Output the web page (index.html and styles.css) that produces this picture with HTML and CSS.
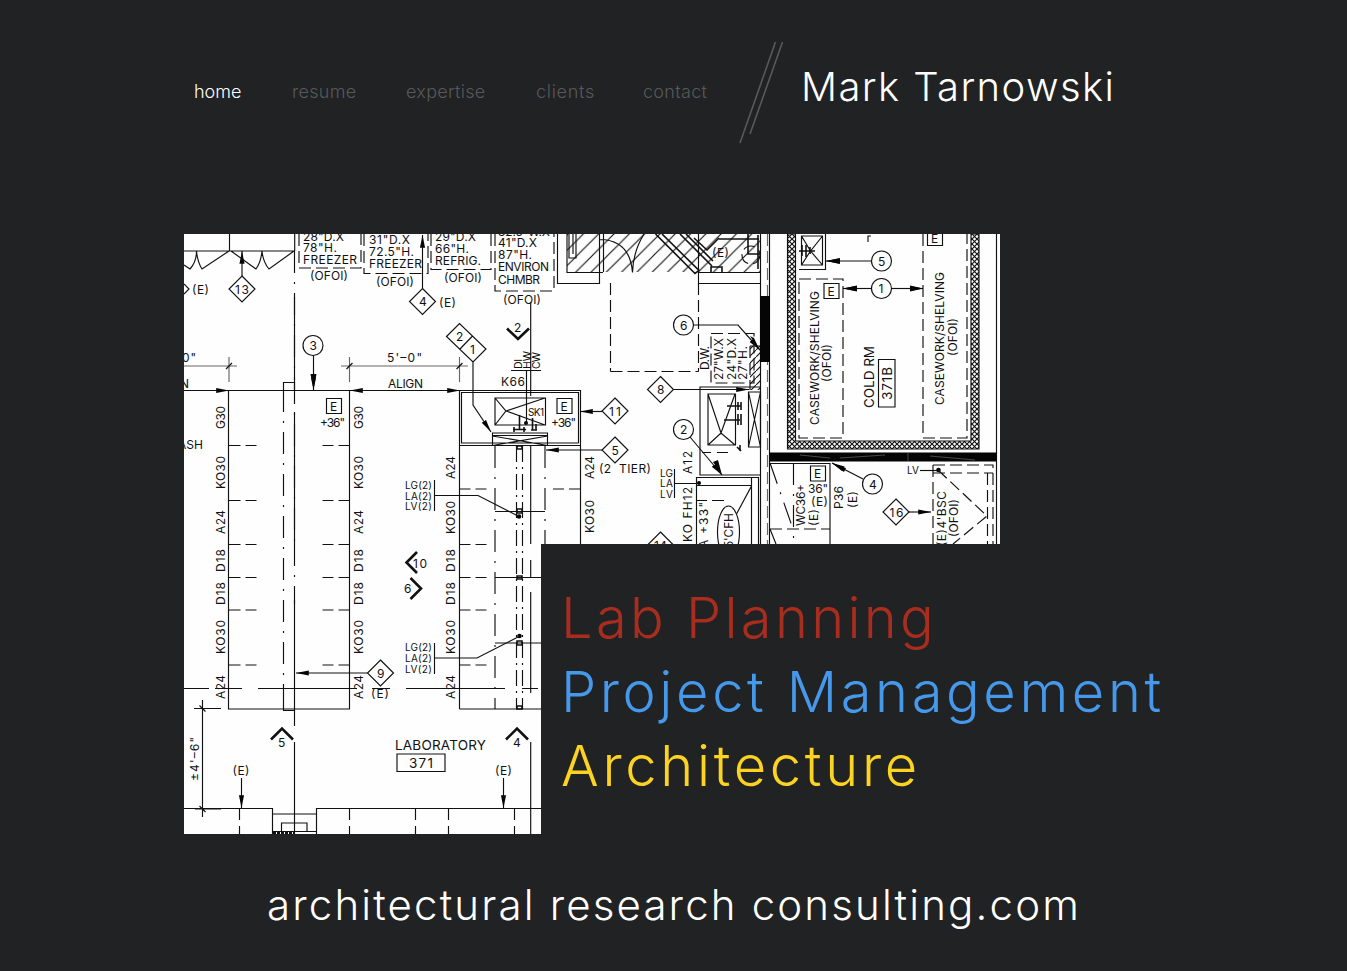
FILE: index.html
```html
<!DOCTYPE html>
<html lang="en">
<head>
<meta charset="utf-8">
<title>Mark Tarnowski</title>
<link rel="stylesheet" href="styles.css">
</head>
<body>
<div class="page">
<header class="header">
<nav class="nav">
<a class="nav-link home active">home</a><a class="nav-link resume">resume</a><a class="nav-link expertise">expertise</a><a class="nav-link clients">clients</a><a class="nav-link contact">contact</a>
</nav>
<svg class="slashes" width="46" height="104" viewBox="739 41 46 104"><path d="M775.5 42 740 143M782.500 42 750 134"/></svg>
<h1 class="name">Mark Tarnowski</h1>
</header>
<main class="hero">
<svg class="plan" width="816" height="600" viewBox="184 234 816 600">
<defs>
<g id="dia"><path d="M0-13 13 0 0 13-13 0Z"/></g>
<g id="cir"><circle r="10"/></g>
<g id="ebox"><path d="M-7.500-7.500h15v15h-15z"/></g>
<marker id="arr" orient="auto-start-reverse" markerUnits="userSpaceOnUse" markerWidth="14" markerHeight="8" refX="11" refY="3" viewBox="0 0 12 6"><path d="M0 .8 11 3 0 5.200Z" class="solid"/></marker>
<pattern id="hatch" width="15.300" height="15.300" patternUnits="userSpaceOnUse" x="568" y="234"><path d="M-1 16.300 16.300-1M-1 1 1-1M14.300 16.300l2-2"/></pattern>
<pattern id="mesh" width="5" height="5" patternUnits="userSpaceOnUse" x="787" y="234"><path d="M0 0 5 5M5 0 0 5"/></pattern>
<pattern id="fine" width="7" height="7" patternUnits="userSpaceOnUse"><path d="M-1 8 8-1"/></pattern>
</defs>
<rect class="paper" x="184" y="234" width="816" height="600"/>

<!-- shafts, doors and corridor wall -->
<path class="hatched" d="M567 234H760V272H567Z"/>
<path d="M567 234v38.500h36M698 272.500h62.500M557.500 234v49.500h42V234M603.500 234v38M600 239.500Q630 240 632.500 272.500Q633 252 644 234M569 234v24h7v-24M573 234v20M698.500 234v49.500h62V544M760.500 234v50M769.500 234V544"/>
<path class="mid" d="M655.500 234 695 273.500 699 270.500 662 234M680 234l32 32M686 234l27 27M694 238l13 12 12-12M748 234v20h12M711 272v-5h11v5M758 235v34M719 239h40"/>
<circle cx="751" cy="255" r="9" class="dash"/><text x="712" y="257" textLength="17">(E)</text>
<path class="dash" d="M610.500 283v88.500M610.500 371.500h88M698.500 283v88.500"/>
<path class="grey dash" d="M767.500 234V544"/>
<rect class="solid" x="760" y="296" width="10" height="66"/>

<!-- cabinets along the top edge -->
<path d="M184 251h111M229.500 234v17M294.700 234v17M196.500 251q0 11-6.500 18l-6-4M196.500 251q1 11 5.500 18l27-18M262 251q-1 11-6 18l-25-18M262 251q1 11 7 18l25-18"/>
<path class="dash" d="M299 234v34h62v-34M364 234v39.500h64V234M431 234v35.500h60V234M495 234v57h59v-57"/>
<text x="303" y="241" textLength="41">28"D.X</text><text x="303" y="252" textLength="34">78"H.</text><text x="303" y="264" textLength="54">FREEZER</text><text x="310" y="280" textLength="38">(OFOI)</text>
<text x="369" y="244" textLength="41">31"D.X</text><text x="369" y="255.500" textLength="45">72.5"H.</text><text x="369" y="267.500" textLength="53">FREEZER</text><text x="376" y="286" textLength="38">(OFOI)</text>
<text x="435" y="241" textLength="41">29"D.X</text><text x="435" y="252.500" textLength="34">66"H.</text><text x="435" y="264.500" textLength="46">REFRIG.</text><text x="444" y="282" textLength="38">(OFOI)</text>
<text x="498" y="236" textLength="52">32.5"W.X</text><text x="498" y="247" textLength="39">41"D.X</text><text x="498" y="258.500" textLength="34">87"H.</text><text x="498" y="271" textLength="51">ENVIRON</text><text x="498" y="284" textLength="42">CHMBR</text><text x="503" y="304" textLength="38">(OFOI)</text>
<use href="#dia" x="242" y="289"/><text x="235" y="293.500" textLength="14">13</text><path d="M242 276v-25" marker-end="url(#arr)"/><path d="M184 284l5 5-5 5"/><text x="192" y="294" textLength="17">(E)</text>
<use href="#dia" x="422.500" y="301.500"/><text x="419" y="306">4</text><path d="M422.500 288v-53" marker-end="url(#arr)"/><text x="439" y="306.500" textLength="17">(E)</text>

<!-- dimensions -->
<path class="grey" d="M184 366h53M341 366h127M229 357v25M349.500 357v25M459.500 357v25"/>
<path d="M226 369l6-6M346.500 369l6-6M456.500 369l6-6"/>
<path d="M184 390.500h45" marker-end="url(#arr)"/><path d="M350 390.500h110" marker-start="url(#arr)" marker-end="url(#arr)"/>
<text x="182" y="362" textLength="14">0"</text><text x="387" y="362" textLength="35">5'–0"</text><text x="388" y="388" textLength="35">ALIGN</text><text x="180" y="388">N</text><text x="178" y="449" textLength="25">ASH</text>

<!-- bench on the left -->
<path d="M228.500 390.500h121V709h-121zM283.500 390v-7.500h11M283.500 689v21.500h11"/>
<path class="axis" d="M294.500 251V380M294.500 382V544"/><path class="axis" d="M283.500 390V689"/><path d="M294.500 297v94M294.500 412v132M294.500 600v126M294.500 742v92"/><path class="axis" d="M294.500 544v60"/>
<path d="M228.500 445.500h12m5 0h11m66 0h11m5 0h11M228.500 500.500h12m5 0h11m66 0h11m5 0h11M228.500 544.500h12m5 0h11m66 0h11m5 0h11M228.500 577.500h12m5 0h11m66 0h11m5 0h11M228.500 610h12m5 0h11m66 0h11m5 0h11M228.500 665h12m5 0h11m66 0h11m5 0h11"/>
<use href="#cir" x="313" y="345.500"/><text x="309.500" y="350">3</text><path d="M313.500 355.500V390" marker-end="url(#arr)"/><path class="solid" d="M310.500 374h6l-3 15z"/>
<use href="#ebox" x="334" y="406"/><text x="330" y="410.500">E</text><text x="320" y="427" textLength="25">+36"</text>
<g>
<text transform="translate(225 429)rotate(-90)" textLength="23">G30</text><text transform="translate(225 489)rotate(-90)" textLength="33">KO30</text><text transform="translate(225 534)rotate(-90)" textLength="24">A24</text><text transform="translate(225 572)rotate(-90)" textLength="23">D18</text><text transform="translate(225 605)rotate(-90)" textLength="23">D18</text><text transform="translate(225 654)rotate(-90)" textLength="34">KO30</text><text transform="translate(225 699)rotate(-90)" textLength="24">A24</text>
<text transform="translate(363 429)rotate(-90)" textLength="23">G30</text><text transform="translate(363 489)rotate(-90)" textLength="33">KO30</text><text transform="translate(363 534)rotate(-90)" textLength="24">A24</text><text transform="translate(363 572)rotate(-90)" textLength="23">D18</text><text transform="translate(363 605)rotate(-90)" textLength="23">D18</text><text transform="translate(363 654)rotate(-90)" textLength="34">KO30</text><text transform="translate(363 699)rotate(-90)" textLength="24">A24</text>
</g>
<path d="M184 688.500h25m6 0h27m16 0h99m15 0h18m16 0h99m17 0h16"/>
<use href="#dia" x="380.500" y="673"/><text x="377" y="677.500">9</text><path d="M367.500 673H296" marker-end="url(#arr)"/><text x="371" y="698" textLength="18">(E)</text>

<!-- lower wall -->
<path d="M202.500 700v117M194 708.500h27M195 809h26M199.500 705.500l6 6M199.500 806l6 6"/>
<text transform="translate(199 781)rotate(-90)" textLength="44">±4'–6"</text>
<path d="M184 808.500h88.500V834M272.500 814h44M316.500 834v-25.500H541M281.500 831v-8h25.500v8M272.500 831.500h44"/>
<path class="thick hatchline" d="M273 833h22"/>
<path d="M239.500 809v11m0 6v8M349.500 809v11m0 6v8M415.500 809v11m0 6v8M448.500 809v11m0 6v8M514.500 809v11m0 6v8"/>
<text x="232.500" y="775" textLength="17">(E)</text><path d="M241.500 778V808" marker-end="url(#arr)"/><text x="495" y="775" textLength="17">(E)</text><path d="M503.500 778V808" marker-end="url(#arr)"/>
<path class="thick" d="M271 739.500 282 728.500 293 739.500M506 739.500 517 728.500 528 739.500M507 328.500 518 339 529 328.500M417 552 406.500 562.500 417 573M410.500 578 421 588.500 410.500 599"/>
<text x="278" y="747">5</text><text x="513" y="747">4</text><text x="514" y="332">2</text><text x="413" y="568" textLength="14">10</text><text x="404" y="593">6</text>
<text class="room" x="395" y="750" textLength="91">LABORATORY</text><path d="M397 754h48v17.500h-48z"/><text class="room" x="409" y="768" textLength="24">371</text>

<!-- island bench with sink -->
<path d="M459.500 709V390.500h121V544M461.500 443.500v-51h117v50.500M459.500 445.500h121M461.500 443h117M459.500 709H541M495 511.500h50M495 577.500h46M495 643h46M495 398h50.500v27H495zM495 398l11 13 39-13M495 425l11-14 39 14M492.500 433h55v12.500h-55zM492.500 435.500h55M492.500 436l55 9.500M547.500 436l-55 9.500"/>
<path class="axis" d="M495 446V709M545 446v98"/><path class="axis-long" d="M516.500 446V709M522.500 446V709"/>
<path d="M530.700 302v94M530.700 445v99M526.500 371v53M511 370.500h30M530.700 592v101M530.700 742v92M530.700 560v17"/>
<path class="mid" d="M519.500 415v14M532.500 418v12M513 429.500h13M514 427v5M524 427v5M531 430h6M536 424v6M517 446h5v3h-5zM517 509h5v4h-5zM517 576h5v3h-5zM517 641h5v4h-5zM517 706h5v3h-5z"/>
<circle class="solid" cx="526" cy="423" r="2"/><circle class="solid" cx="519" cy="516.500" r="2.300"/><circle class="solid" cx="519.500" cy="636" r="2.300"/>
<text x="501" y="386" textLength="24">K66</text><text class="small" x="528" y="416" textLength="16">SK1</text>
<g class="tiny"><text transform="translate(522 369)rotate(-90)" textLength="10">DI</text><text transform="translate(531 369)rotate(-90)" textLength="18">HW</text><text transform="translate(539.500 369)rotate(-90)" textLength="17">CW</text></g>
<use href="#ebox" x="564.500" y="406"/><text x="560.500" y="410.500">E</text><text x="551" y="427" textLength="25">+36"</text>
<path d="M446.500 336.500 459.500 323.500 486 349 473 362ZM472.500 336 460 349M473 362v43l18 27" marker-end="url(#arr)"/><text x="456" y="341">2</text><text x="470" y="354">1</text>
<path d="M459.500 489h11m5 0h11M459.500 544.500h11m5 0h11M459.500 577.500h11m5 0h11M459.500 610h11m5 0h11M459.500 665h11m5 0h11M553 489h11m5 0h11"/>
<text transform="translate(455 479)rotate(-90)" textLength="23">A24</text><text transform="translate(455 534)rotate(-90)" textLength="33">KO30</text><text transform="translate(455 572)rotate(-90)" textLength="23">D18</text><text transform="translate(455 605)rotate(-90)" textLength="23">D18</text><text transform="translate(455 654)rotate(-90)" textLength="34">KO30</text><text transform="translate(455 699)rotate(-90)" textLength="24">A24</text>
<text transform="translate(594 479)rotate(-90)" textLength="23">A24</text><text transform="translate(594 533)rotate(-90)" textLength="33">KO30</text>
<g class="small"><text x="405" y="488.500" textLength="27">LG(2)</text><text x="405" y="499.500" textLength="27">LA(2)</text><text x="405" y="510" textLength="27">LV(2)</text><text x="405" y="651" textLength="27">LG(2)</text><text x="405" y="662" textLength="27">LA(2)</text><text x="405" y="672.500" textLength="27">LV(2)</text></g>
<path d="M434.500 480v31M434.500 495.500H478l41 21M434.500 643v31M434.500 658H477l42-21.500"/>
<use href="#dia" x="615" y="411"/><text x="609" y="415.500" textLength="12">11</text><path d="M602 411.500h-22" marker-end="url(#arr)"/>
<use href="#dia" x="615" y="450"/><text x="611.500" y="454.500">5</text><path d="M602 450h-56" marker-end="url(#arr)"/><text x="599" y="473" textLength="52">(2&#160; TIER)</text>

<!-- glass wash equipment -->
<use href="#cir" x="683.500" y="325"/><text x="680" y="329.500">6</text><path d="M694 325h44l22 25" marker-end="url(#arr)"/><path class="solid" d="M750 336l10 15-6-13z"/>
<path class="dash" d="M711 333.500h43V383H711zM750 346h10M750 346v44"/><path class="fine" d="M750 346h10v44h-10z"/>
<text transform="translate(709 370)rotate(-90)" textLength="24">D.W.</text><text transform="translate(723 380)rotate(-90)" textLength="42">27"W.X</text><text transform="translate(736 380)rotate(-90)" textLength="42">24"D.X</text><text transform="translate(747 380)rotate(-90)" textLength="34">27"H.</text>
<use href="#dia" x="660.500" y="389.500"/><text x="657" y="394">8</text><path d="M674 389.500h75" marker-end="url(#arr)"/>
<path d="M760 387h-60v88h60M708 394h27.500v51H708zM708 394l13 39 14-39M708 445l13-12 14 12M748.500 392h12v55h-12zM748.500 392l12 55M760.500 392l-12 55"/>
<path class="mid" d="M727 406h14M724 420h16M738 402v8M741 402v8M738 414v11M741 414v11M737 447l4 4M740 445v6"/>
<use href="#cir" x="683.500" y="429.500"/><text x="680" y="434">2</text><path d="M690 437l32 38" marker-end="url(#arr)"/><path class="solid" d="M713 462l9 13-4-15z"/>
<text transform="translate(692 474)rotate(-90)" textLength="23">A12</text><text transform="translate(692 542)rotate(-90)" textLength="55">KO FH12</text><text transform="translate(708 548)rotate(-90)" textLength="46">A +33"</text>
<g class="small"><text x="660" y="477" textLength="13">LG</text><text x="660" y="487" textLength="13">LA</text><text x="660" y="498" textLength="13">LV</text></g>
<path d="M674.500 469v29M674.500 483.500h24M696.500 544v-66.500h62V544M697 485.500h54.500V544M751.500 478v8L736.500 514M702 452.500h9m6 0h11M697 500.500h10m5 0h12"/>
<circle class="solid" cx="699" cy="483" r="2"/><ellipse cx="728.500" cy="532" rx="11" ry="26"/><text transform="translate(733 548)rotate(-90)" textLength="35">5'CFH</text>
<use href="#dia" x="660.500" y="545"/><text x="654" y="550" textLength="13">14</text>

<!-- cold room -->
<path class="meshed" d="M787.500 234h8v207H971V234h8v215H787.500z"/>
<path class="dash" d="M799 279h44v159h-44zM923 234v204h44V234"/>
<path d="M996.500 234V544M799 269.500h26.500V234M801.500 236h21v29h-21zM801.500 236l9 15 12-15M801.500 265l9-14 12 14M868 242v-6l3 0"/>
<path class="mid" d="M799 251h16M802 245v11M806 245v12M810 247v7"/>
<use href="#cir" x="881.500" y="261"/><text x="878" y="265.500">5</text><path d="M871 261h-45" marker-end="url(#arr)"/><path class="solid" d="M840 258v6l-14-3z"/>
<use href="#cir" x="881.500" y="288.500"/><text x="878.500" y="293">1</text><path d="M871 288.500h-28" marker-end="url(#arr)"/><path d="M892 288.500h31" marker-end="url(#arr)"/><path class="solid" d="M857 285.500v6l-14-3zM910 285.500v6l13-3z"/>
<use href="#ebox" x="831.500" y="291"/><text x="827.500" y="295.500">E</text><use href="#ebox" x="935" y="238"/><text x="931" y="243">E</text>
<text transform="translate(819 425)rotate(-90)" textLength="134">CASEWORK/SHELVING</text><text transform="translate(831 382)rotate(-90)" textLength="38">(OFOI)</text>
<text transform="translate(944 405)rotate(-90)" textLength="133">CASEWORK/SHELVING</text><text transform="translate(957 356)rotate(-90)" textLength="38">(OFOI)</text>
<text class="room" transform="translate(874 408)rotate(-90)" textLength="62">COLD RM</text><path d="M878.500 359.500h16.500v47.500h-16.500z"/><text class="room" transform="translate(892 400)rotate(-90)" textLength="33">371B</text>
<rect class="solid" x="769.500" y="452.500" width="227" height="9"/><path class="seam" d="M800 455l30 3M840 458l45-3M930 456l45 4M908 453v8"/>

<!-- room below the cold room -->
<path d="M770 463.500h60V544"/><path class="axis" d="M770 463l23 66M793.500 463v81M770 529l6 15"/><path class="dash" d="M770 529h60"/>
<use href="#ebox" x="818" y="473.500"/><text x="814" y="478">E</text>
<text transform="translate(805 526)rotate(-90)" textLength="42">WC36+</text><text x="808" y="493" textLength="20">36"</text><text x="811" y="506" textLength="17">(E)</text><text transform="translate(818 526)rotate(-90)" textLength="17">(E)</text>
<text transform="translate(843 509)rotate(-90)" textLength="23">P36</text><text transform="translate(857 508)rotate(-90)" textLength="17">(E)</text>
<use href="#cir" x="872.500" y="484"/><text x="869" y="488.500">4</text><path d="M863 479l-31-16" marker-end="url(#arr)"/><path class="solid" d="M844 472l2-4-14-5z"/>
<use href="#dia" x="896" y="512"/><text x="889.500" y="516.500" textLength="14">16</text><path d="M909 512h22" marker-end="url(#arr)"/>
<text class="small" x="907" y="474" textLength="12">LV</text><path d="M920 470.500h17"/><circle class="solid" cx="938.500" cy="470" r="2.300"/>
<path class="dash" d="M933 465h60v79M933 465v79M933 473h60M987.500 473v71M938 470l49 46-34 28"/>
<text transform="translate(946 546)rotate(-90)" textLength="55">(E)4'BSC</text><text transform="translate(958 537)rotate(-90)" textLength="38">(OFOI)</text>
</svg>
<div class="services">
<p class="service lab">Lab Planning</p>
<p class="service project">Project Management</p>
<p class="service arch">Architecture</p>
</div>
</main>
<footer class="tagline">architectural research consulting.com</footer>
</div>
</body>
</html>
```
FILE: styles.css
```css
* { box-sizing: border-box; }
body { margin: 0; background: #212224; color: #fff; font-family: Inter, Roboto, sans-serif; font-weight: 300; }
.page { width: 1347px; height: 971px; overflow: hidden; padding-left: 184px; }
.header { display: flex; align-items: flex-start; height: 234px; padding: 41px 0 0 10px; }
.nav { display: flex; width: 545px; padding-top: 39px; gap: 50px; font-size: 18px; line-height: 24px; }
.nav-link { flex: none; color: #58595b; white-space: nowrap; letter-spacing: .3px; }
.nav-link.active { color: #fff; }
.home { width: 48px; letter-spacing: 0; }
.resume { width: 64px; }
.expertise { width: 80px; }
.clients { width: 57px; letter-spacing: .7px; }
.contact { width: 65px; }
.slashes { flex: none; fill: none; stroke: #58595b; stroke-width: 1.6; }
.name { margin: 21px 0 0 16px; font-size: 40px; line-height: 50px; font-weight: 300; white-space: nowrap; letter-spacing: 1.4px; }
.hero { position: relative; height: 600px; }
.plan { display: block; fill: none; stroke: #111; stroke-width: 1.15; }
.plan text { font-family: Inter, Roboto, sans-serif; font-size: 12px; font-weight: 400; fill: #111; stroke: none; }
.plan .small, .plan .small text { font-size: 10px; }
.plan .tiny text { font-size: 10.5px; }
.plan .room { font-size: 13.5px; }
.paper { fill: #fefefe; stroke: none; }
.solid { fill: #050505; stroke: none; }
.seam { stroke: #777; stroke-width: .6; }
.grey { stroke: #666; }
.mid { stroke-width: 1.6; }
.thick { stroke-width: 2.6; }
.hatchline { stroke-dasharray: 3 1; }
.dash { stroke-dasharray: 12 5; }
.axis { stroke-dasharray: 22 9 2 9; }
.axis-long { stroke-dasharray: 16 5 2 5; }
.hatched { fill: url(#hatch); stroke: none; }
.meshed { fill: url(#mesh); }
.fine { fill: url(#fine); stroke: none; }
.services { position: absolute; left: 357px; top: 310px; width: 640px; height: 290px; padding: 37px 0 0 20px; background: #212224; }
.service { margin: 0; font-size: 56px; line-height: 74px; white-space: nowrap; }
.lab { color: #a82d1e; letter-spacing: 3.3px; }
.project { color: #4698ea; letter-spacing: 3.6px; }
.arch { color: #fdd322; letter-spacing: 3.7px; }
.tagline { padding: 45px 0 0 83px; font-size: 42px; line-height: 52px; white-space: nowrap; letter-spacing: 2.15px; }
```
